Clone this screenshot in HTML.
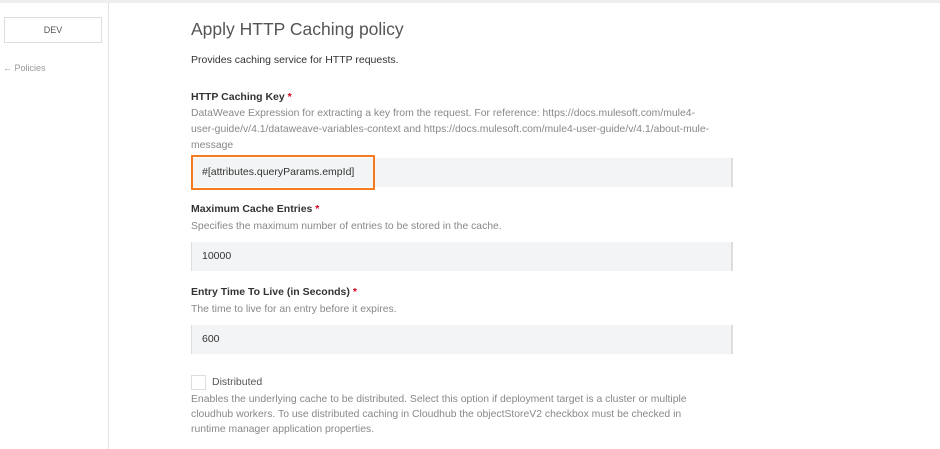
<!DOCTYPE html>
<html><head><style>
*{margin:0;padding:0;box-sizing:border-box}
body{width:940px;height:449px;background:#fff;font-family:"Liberation Sans",sans-serif;position:relative;overflow:hidden;color:#444}
.top{position:absolute;left:0;top:0;width:940px;height:3px;background:#eceef0}
.side{position:absolute;left:108px;top:3px;width:1px;height:446px;background:#e3e3e3}
.dev{position:absolute;left:4px;top:17px;width:98px;height:26px;border:1px solid #ddd;font-size:9px;text-align:center;line-height:24px;color:#555}
.pol{position:absolute;left:3px;top:63px;font-size:9px;color:#999}
.a{position:absolute;left:191px;white-space:nowrap}
.t{font-size:17.5px;color:#555;top:19px}
.d{font-size:10.5px;color:#333}
.l{font-size:10.5px;font-weight:bold;color:#333}
.l b{color:#d0021b}
.h{font-size:10.4px;color:#888;line-height:16px}
.in{position:absolute;left:191px;width:542px;height:29px;background:#f3f4f5;border-left:1px solid #ddd;border-right:2px solid #ddd;font-size:10.5px;color:#333;padding-left:10px;line-height:29px}
.or{position:absolute;left:191px;top:155px;width:184px;height:35px;border:2.5px solid #f47b20}
.cb{position:absolute;left:191px;top:375px;width:15px;height:15px;border:1px solid #ddd}
</style></head><body>
<div class="top"></div><div class="side"></div>
<div class="dev">DEV</div>
<div class="pol">← Policies</div>
<div class="a t">Apply HTTP Caching policy</div>
<div class="a d" style="top:54px">Provides caching service for HTTP requests.</div>
<div class="a l" style="top:91px">HTTP Caching Key <b>*</b></div>
<div class="a h" style="top:106px">DataWeave Expression for extracting a key from the request. For reference: https://docs.mulesoft.com/mule4-<br>user-guide/v/4.1/dataweave-variables-context and https://docs.mulesoft.com/mule4-user-guide/v/4.1/about-mule-<br>message</div>
<div class="in" style="top:158px">#[attributes.queryParams.empId]</div>
<div class="or"></div>
<div class="a l" style="top:203px">Maximum Cache Entries <b>*</b></div>
<div class="a h" style="top:219px">Specifies the maximum number of entries to be stored in the cache.</div>
<div class="in" style="top:242px">10000</div>
<div class="a l" style="top:286px">Entry Time To Live (in Seconds) <b>*</b></div>
<div class="a h" style="top:302px">The time to live for an entry before it expires.</div>
<div class="in" style="top:325px">600</div>
<div class="cb"></div>
<div class="a d" style="left:212px;top:376px;color:#555">Distributed</div>
<div class="a h" style="top:392px;line-height:15px">Enables the underlying cache to be distributed. Select this option if deployment target is a cluster or multiple<br>cloudhub workers. To use distributed caching in Cloudhub the objectStoreV2 checkbox must be checked in<br>runtime manager application properties.</div>
</body></html>
